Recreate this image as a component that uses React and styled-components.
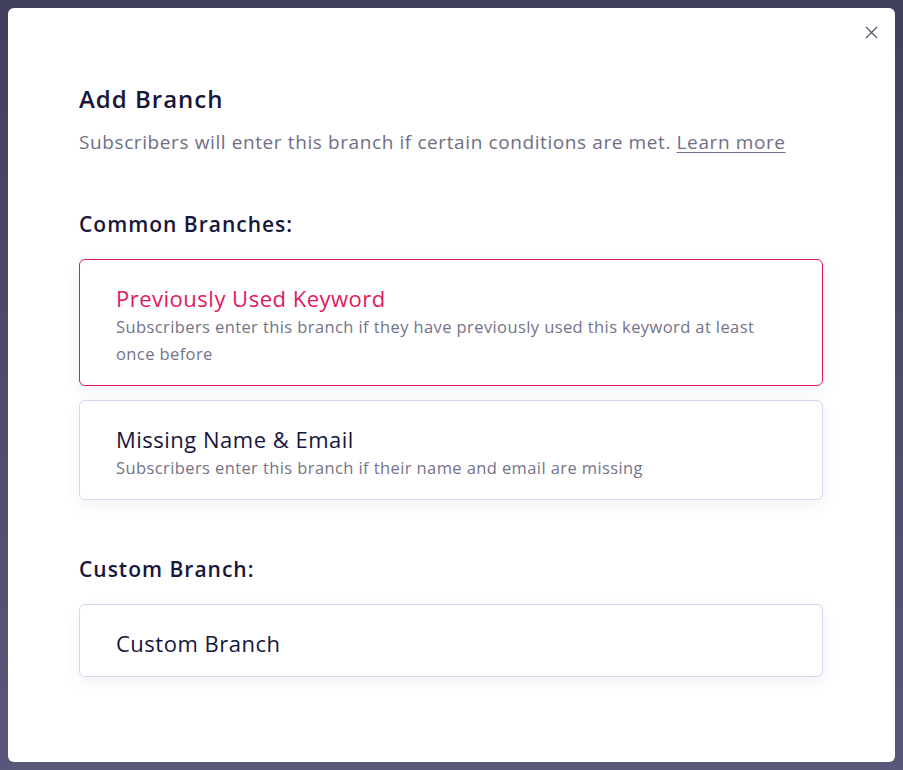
import styled, { createGlobalStyle } from 'styled-components';

const GlobalStyle = createGlobalStyle`
  html, body {
    margin: 0;
    padding: 0;
    background: #4a4966;
  }
  * {
    box-sizing: border-box;
  }
`;

const commonBranches = [
  {
    title: 'Previously Used Keyword',
    description:
      'Subscribers enter this branch if they have previously used this keyword at least once before',
    active: true,
  },
  {
    title: 'Missing Name & Email',
    description: 'Subscribers enter this branch if their name and email are missing',
  },
];

const CloseIcon = () => (
  <svg width='13' height='13' viewBox='0 0 13 13' fill='none'>
    <path d='M1 1L12 12M12 1L1 12' stroke='#4d4c68' strokeWidth='1.1' />
  </svg>
);

const BranchCard = ({ title, description, active }) => (
  <Card $active={active}>
    <CardTitle $active={active}>{title}</CardTitle>
    {description && <CardText>{description}</CardText>}
  </Card>
);

const App = () => {
  return (
    <>
      <GlobalStyle />
      <Overlay>
        <Modal>
          <CloseButton aria-label='Close'>
            <CloseIcon />
          </CloseButton>

          <Title>Add Branch</Title>
          <Subtitle>
            Subscribers will enter this branch if certain conditions are met.{' '}
            <LearnMore href='#'>Learn more</LearnMore>
          </Subtitle>

          <SectionTitle>Common Branches:</SectionTitle>
          <CardList>
            {commonBranches.map((branch) => (
              <BranchCard key={branch.title} {...branch} />
            ))}
          </CardList>

          <SectionTitle>Custom Branch:</SectionTitle>
          <CardList>
            <BranchCard title='Custom Branch' />
          </CardList>
        </Modal>
      </Overlay>
    </>
  );
};

const Overlay = styled.div`
  height: 770px;
  padding: 8px;
  background: linear-gradient(180deg, #413f5e 0%, #4d4c6a 50%, #58577a 100%);
  font-family: 'Open Sans', 'Noto Sans', sans-serif;
`;

const Modal = styled.div`
  position: relative;
  width: 887px;
  height: 754px;
  background: #ffffff;
  border-radius: 6px;
  padding: 74px 72px 0 71px;
`;

const CloseButton = styled.button`
  position: absolute;
  top: 18px;
  right: 17px;
  display: flex;
  padding: 0;
  border: none;
  background: none;
  cursor: pointer;
`;

const Title = styled.h1`
  margin: 0;
  font-size: 24px;
  font-weight: 600;
  line-height: 34px;
  letter-spacing: 1px;
  color: #17163b;
`;

const Subtitle = styled.p`
  margin: 13px 0 0;
  font-size: 19px;
  line-height: 26px;
  letter-spacing: 0.6px;
  color: #6f6e85;
`;

const LearnMore = styled.a`
  color: #6f6e85;
  text-decoration: underline;
  text-underline-offset: 3px;
`;

const SectionTitle = styled.h2`
  margin: 54px 0 0;
  font-size: 21px;
  font-weight: 600;
  line-height: 30px;
  letter-spacing: 1px;
  color: #17163b;
`;

const CardList = styled.div`
  display: flex;
  flex-direction: column;
  gap: 14px;
  margin-top: 20px;
`;

const Card = styled.div`
  padding: 23px 60px 18px 36px;
  border: 1px solid ${({ $active }) => ($active ? '#e3185f' : '#d5d7ec')};
  border-radius: 6px;
  background: #ffffff;
  box-shadow: 0 6px 16px rgba(70, 80, 160, 0.07);
  cursor: pointer;
`;

const CardTitle = styled.div`
  font-size: 22px;
  line-height: 30px;
  letter-spacing: 0.5px;
  color: ${({ $active }) => ($active ? '#e0195f' : '#17163b')};
`;

const CardText = styled.div`
  font-size: 16.5px;
  line-height: 27px;
  letter-spacing: 0.4px;
  color: #74738a;
`;

export default App;
